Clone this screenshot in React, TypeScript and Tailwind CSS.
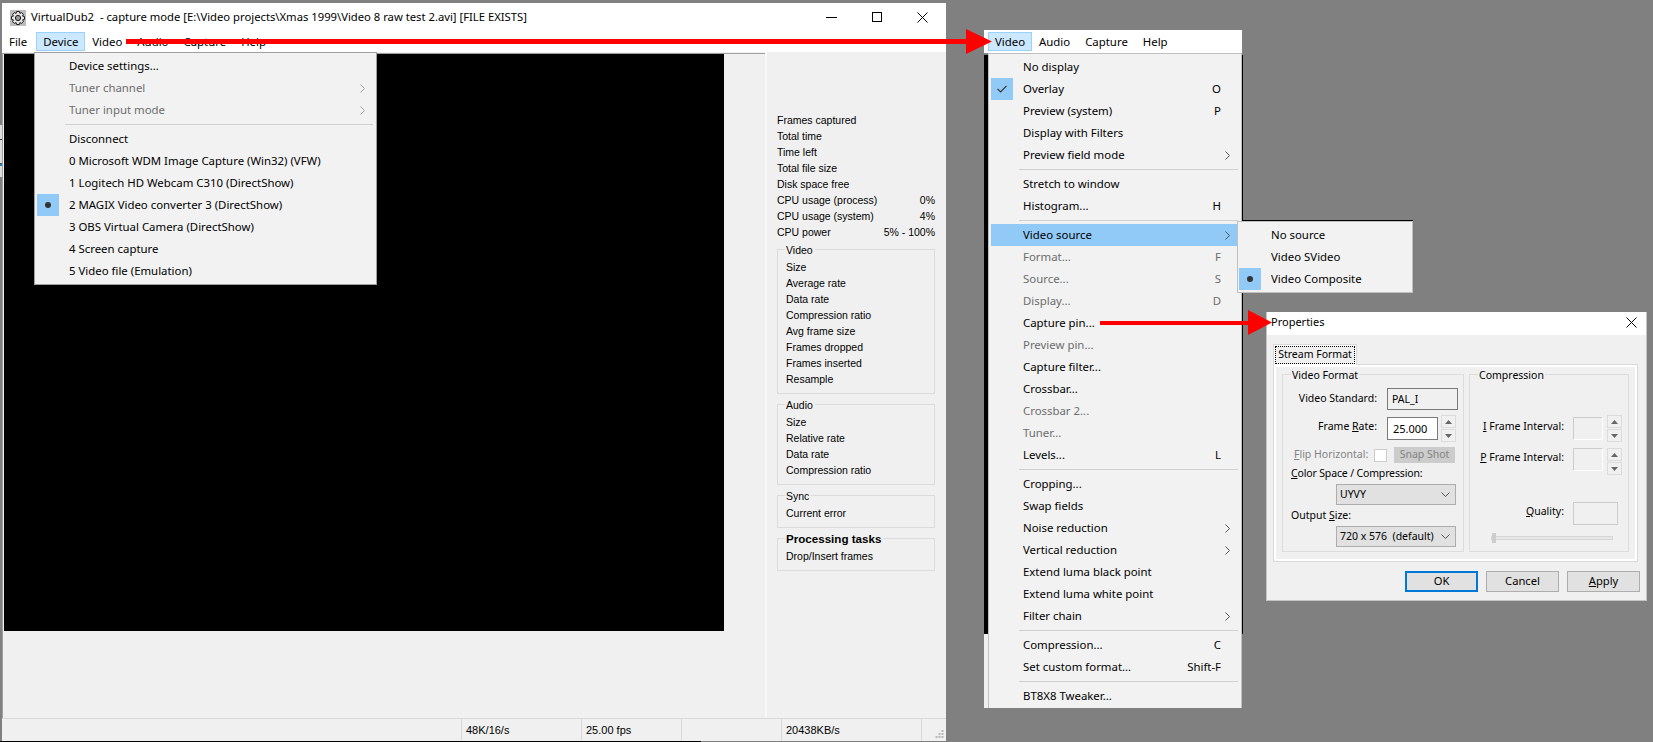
import type { ReactNode } from "react";

const UI = "font-['Noto_Sans',sans-serif] text-[11.4px] text-black";
const SMALL = "font-['Liberation_Sans',sans-serif] text-[10.5px] text-black";

type Item =
  | "sep"
  | {
      label: string;
      key?: string;
      arrow?: boolean;
      off?: boolean;
      mark?: "check" | "dot";
      hot?: boolean;
    };

const DEVICE_ITEMS: Item[] = [
  { label: "Device settings..." },
  { label: "Tuner channel", off: true, arrow: true },
  { label: "Tuner input mode", off: true, arrow: true },
  "sep",
  { label: "Disconnect" },
  { label: "0 Microsoft WDM Image Capture (Win32) (VFW)" },
  { label: "1 Logitech HD Webcam C310 (DirectShow)" },
  { label: "2 MAGIX Video converter 3 (DirectShow)", mark: "dot" },
  { label: "3 OBS Virtual Camera (DirectShow)" },
  { label: "4 Screen capture" },
  { label: "5 Video file (Emulation)" },
];

const VIDEO_ITEMS: Item[] = [
  { label: "No display" },
  { label: "Overlay", key: "O", mark: "check" },
  { label: "Preview (system)", key: "P" },
  { label: "Display with Filters" },
  { label: "Preview field mode", arrow: true },
  "sep",
  { label: "Stretch to window" },
  { label: "Histogram...", key: "H" },
  "sep",
  { label: "Video source", arrow: true, hot: true },
  { label: "Format...", key: "F", off: true },
  { label: "Source...", key: "S", off: true },
  { label: "Display...", key: "D", off: true },
  { label: "Capture pin..." },
  { label: "Preview pin...", off: true },
  { label: "Capture filter..." },
  { label: "Crossbar..." },
  { label: "Crossbar 2...", off: true },
  { label: "Tuner...", off: true },
  { label: "Levels...", key: "L" },
  "sep",
  { label: "Cropping..." },
  { label: "Swap fields" },
  { label: "Noise reduction", arrow: true },
  { label: "Vertical reduction", arrow: true },
  { label: "Extend luma black point" },
  { label: "Extend luma white point" },
  { label: "Filter chain", arrow: true },
  "sep",
  { label: "Compression...", key: "C" },
  { label: "Set custom format...", key: "Shift-F" },
  "sep",
  { label: "BT8X8 Tweaker..." },
];

const SOURCE_ITEMS: Item[] = [
  { label: "No source" },
  { label: "Video SVideo" },
  { label: "Video Composite", mark: "dot" },
];

function MenuRows({ items, keyed }: { items: Item[]; keyed?: boolean }) {
  return (
    <>
      {items.map((it, i) =>
        it === "sep" ? (
          <div key={i} className="h-[7px] flex items-center pl-[28px] pr-[1px]">
            <div className="h-px w-full bg-[#d0d0d0]" />
          </div>
        ) : (
          <div
            key={i}
            className={`h-[22px] flex items-center ${it.hot ? "bg-[#91c9f7]" : ""} ${it.off ? "text-[#6d6d6d]" : "text-black"}`}
          >
            <div
              className={`w-[22px] h-[22px] shrink-0 flex items-center justify-center ${it.mark ? "bg-[#91c9f7]" : ""}`}
            >
              {it.mark === "dot" && <div className="w-[6px] h-[6px] rounded-full bg-[#333]" />}
              {it.mark === "check" && (
                <svg width="10" height="8" viewBox="0 0 10 8" fill="none">
                  <path d="M0.5 3.8 L3.6 7 L9.5 0.8" stroke="#333" strokeWidth="1.2" />
                </svg>
              )}
            </div>
            <span className="ml-[10px] flex-1 whitespace-nowrap">{it.label}</span>
            {keyed && <span className="whitespace-nowrap">{it.key}</span>}
            <span className="w-[18px] flex justify-end pr-[9px]">
              {it.arrow && (
                <svg width="5" height="9" viewBox="0 0 5 9" fill="none">
                  <path d="M0.5 0.5 L4.5 4.5 L0.5 8.5" stroke={it.off ? "#a0a0a0" : "#555"} />
                </svg>
              )}
            </span>
          </div>
        ),
      )}
    </>
  );
}

function Row({ children, value }: { children: ReactNode; value?: string }) {
  return (
    <div className="h-[16px] leading-[16px] flex justify-between whitespace-nowrap">
      <span>{children}</span>
      {value && <span>{value}</span>}
    </div>
  );
}

function GroupBox({ title, rows, bold, mt }: { title: string; rows: string[]; bold?: boolean; mt: string }) {
  return (
    <div className={`relative border border-[#dcdcdc] pt-[9px] pb-[6px] pl-[8px] ${mt}`}>
      <span
        className={`absolute left-[7px] -top-[8px] h-[16px] leading-[16px] bg-[#f0f0f0] pl-px pr-[2px] ${bold ? "font-bold text-[11.6px]" : ""}`}
      >
        {title}
      </span>
      {rows.map((r) => (
        <Row key={r}>{r}</Row>
      ))}
    </div>
  );
}

function Spin() {
  return (
    <div className="w-[15px] flex flex-col gap-px">
      {[0, 1].map((n) => (
        <div key={n} className="h-[13px] border border-[#dcdcdc] flex items-center justify-center">
          <svg width="7" height="4" viewBox="0 0 7 4">
            <path d={n === 0 ? "M3.5 0 L7 4 L0 4 Z" : "M0 0 L7 0 L3.5 4 Z"} fill="#666" />
          </svg>
        </div>
      ))}
    </div>
  );
}

function Combo({ text }: { text: string }) {
  return (
    <div className="ml-[53px] mt-[3px] w-[120px] h-[21px] bg-[#e1e1e1] border border-[#adadad] flex items-center pl-[3px] pr-[5px] justify-between">
      <span className="whitespace-pre">{text}</span>
      <svg className="shrink-0" width="9" height="6" viewBox="0 0 9 6" fill="none">
        <path d="M0.5 0.5 L4.5 4.5 L8.5 0.5" stroke="#555" />
      </svg>
    </div>
  );
}

function DlgButton({ children, primary }: { children: ReactNode; primary?: boolean }) {
  return (
    <div
      className={`w-[73px] h-[21px] bg-[#e1e1e1] flex items-center justify-center text-[11.2px] ${primary ? "border-2 border-[#0078d7]" : "border border-[#adadad]"}`}
    >
      {children}
    </div>
  );
}

function Legend({ children }: { children: ReactNode }) {
  return (
    <span className="absolute left-[8px] -top-[8px] h-[16px] leading-[16px] bg-[#f0f0f0] px-px whitespace-nowrap">{children}</span>
  );
}

export default function App() {
  return (
    <div className="relative w-[1653px] h-[742px] overflow-hidden bg-[#808080]">
      {/* main capture window */}
      <div className={`absolute left-[2px] top-[3px] w-[944px] h-[738px] flex flex-col bg-[#f0f0f0] ${UI}`}>
        <div className="h-[28px] shrink-0 bg-white flex items-center relative">
          <svg className="ml-[8px] mt-[1px]" width="16" height="16" viewBox="0 0 16 16">
            <rect width="16" height="16" fill="#bdbdbd" />
            <path
              d="M6.6 1.5 H9.4 L9.9 3.4 L11.7 2.6 L13.4 4.3 L12.6 6.1 L14.5 6.6 V9.4 L12.6 9.9 L13.4 11.7 L11.7 13.4 L9.9 12.6 L9.4 14.5 H6.6 L6.1 12.6 L4.3 13.4 L2.6 11.7 L3.4 9.9 L1.5 9.4 V6.6 L3.4 6.1 L2.6 4.3 L4.3 2.6 L6.1 3.4 Z"
              fill="#e4e4e4"
              stroke="#1c1c1c"
            />
            <circle cx="8" cy="8" r="2.6" fill="#9a9a9a" stroke="#1c1c1c" />
          </svg>
          <span className="ml-[5px] whitespace-pre text-[11.25px]">
            VirtualDub2  - capture mode [E:\Video projects\Xmas 1999\Video 8 raw test 2.avi] [FILE EXISTS]
          </span>
          <div className="ml-auto flex items-center pr-[18px] gap-[35px]">
            <svg width="11" height="1" viewBox="0 0 11 1">
              <rect width="11" height="1" fill="#000" />
            </svg>
            <svg width="10" height="10" viewBox="0 0 10 10" fill="none">
              <rect x="0.5" y="0.5" width="9" height="9" stroke="#000" />
            </svg>
            <svg width="11" height="11" viewBox="0 0 11 11" fill="none">
              <path d="M0.5 0.5 L10.5 10.5 M10.5 0.5 L0.5 10.5" stroke="#000" />
            </svg>
          </div>
        </div>
        <div className="h-[21px] shrink-0 bg-white flex items-center">
          <span className="ml-[7px]">File</span>
          <span className="ml-[9px] h-[19px] w-[49px] bg-[#cce8ff] border border-[#99d1ff] pl-[6px] leading-[17px]">
            Device
          </span>
          <span className="ml-[7px]">Video</span>
          <span className="ml-[15px]">Audio</span>
          <span className="ml-[15px]">Capture</span>
          <span className="ml-[15px]">Help</span>
        </div>
        <div className="flex-1 flex min-h-0">
          <div className="w-[763px] shrink-0 border-t border-l border-[#a0a0a0] mt-px pl-px">
            <div className="w-[720px] h-[577px] bg-black" />
          </div>
          <div className={`flex-1 border-l-2 border-[#f8f8f8] pt-[60px] pl-[10px] pr-[11px] ${SMALL}`}>
            <Row>Frames captured</Row>
            <Row>Total time</Row>
            <Row>Time left</Row>
            <Row>Total file size</Row>
            <Row>Disk space free</Row>
            <Row value="0%">CPU usage (process)</Row>
            <Row value="4%">CPU usage (system)</Row>
            <Row value="5% - 100%">CPU power</Row>
            <GroupBox
              mt="mt-[9px]"
              title="Video"
              rows={["Size", "Average rate", "Data rate", "Compression ratio", "Avg frame size", "Frames dropped", "Frames inserted", "Resample"]}
            />
            <GroupBox mt="mt-[10px]" title="Audio" rows={["Size", "Relative rate", "Data rate", "Compression ratio"]} />
            <GroupBox mt="mt-[10px]" title="Sync" rows={["Current error"]} />
            <GroupBox mt="mt-[10px]" title="Processing tasks" bold rows={["Drop/Insert frames"]} />
          </div>
        </div>
        <div className="h-[23px] shrink-0 border-t border-[#d9d9d9] flex items-center font-['Liberation_Sans',sans-serif] text-[11px]">
          <div className="w-[460px] h-full border-r border-[#d9d9d9]" />
          <div className="w-[120px] h-full border-r border-[#d9d9d9] pl-[4px] leading-[22px]">48K/16/s</div>
          <div className="w-[100px] h-full border-r border-[#d9d9d9] pl-[4px] leading-[22px]">25.00 fps</div>
          <div className="w-[100px] h-full border-r border-[#d9d9d9]" />
          <div className="w-[140px] h-full border-r border-[#d9d9d9] pl-[4px] leading-[22px]">20438KB/s</div>
          <svg className="ml-auto mr-[2px] mt-[8px]" width="9" height="9" viewBox="0 0 9 9" fill="#b8b8b8">
            <rect x="6.5" y="0" width="2" height="2" />
            <rect x="3.5" y="3" width="2" height="2" />
            <rect x="6.5" y="3" width="2" height="2" />
            <rect x="0.5" y="6" width="2" height="2" />
            <rect x="3.5" y="6" width="2" height="2" />
            <rect x="6.5" y="6" width="2" height="2" />
          </svg>
        </div>
      </div>
      <div className="absolute left-0 top-[741px] w-[701px] h-px bg-black" />
      {/* sliver of the window behind, left edge */}
      <div className="absolute left-0 top-[125px] w-[2px] h-[52px] bg-[#dcdcdc]">
        <div className="h-[14px]" />
        <div className="h-px bg-[#333]" />
        <div className="h-[23px]" />
        <div className="h-px bg-[#555]" />
        <div className="h-[2px] bg-[#2a7fc0]" />
      </div>

      {/* device menu */}
      <div className={`absolute left-[34px] top-[52px] w-[343px] border border-[#a0a0a0] bg-[#f2f2f2] p-[2px] ${UI}`}>
        <MenuRows items={DEVICE_ITEMS} />
      </div>

      {/* second capture of the window, video menu open */}
      <div className="absolute left-[984px] top-[30px] w-[260px] h-[678px] flex flex-col">
        <div className={`w-[258px] h-[23px] bg-white flex items-center ${UI}`}>
          <span className="ml-[4px] h-[19px] w-[44px] bg-[#cce8ff] border border-[#99d1ff] pl-[6px] leading-[17px]">
            Video
          </span>
          <span className="ml-[7px]">Audio</span>
          <span className="ml-[15px]">Capture</span>
          <span className="ml-[15px]">Help</span>
        </div>
        <div className="w-[259px] h-[579px] bg-black mt-[2px]" />
        <div className="w-[258px] flex-1 bg-[#f0f0f0]" />
      </div>
      <div className={`absolute left-[988px] top-[53px] w-[254px] h-[655px] overflow-hidden border-x border-t border-[#c0c0c0] bg-[#f2f2f2] p-[2px] ${UI}`}>
        <MenuRows items={VIDEO_ITEMS} keyed />
      </div>

      {/* video source submenu */}
      <div className="absolute left-[1242px] top-[220px] w-[171px] h-px bg-black" />
      <div className={`absolute left-[1237px] top-[221px] w-[176px] border border-[#c0c0c0] bg-[#f2f2f2] p-px pt-[2px] pb-[2px] ${UI}`}>
        <MenuRows items={SOURCE_ITEMS} />
      </div>

      {/* properties dialog */}
      <div className={`absolute left-[1266px] top-[312px] w-[381px] h-[289px] flex flex-col bg-[#f0f0f0] border-b border-x border-[#c4c4c4] font-['Noto_Sans',sans-serif] text-[10.5px] text-black`}>
        <div className="h-[23px] shrink-0 bg-white flex items-center justify-between pl-[4px] pr-[9px] pb-[2px] text-[11px]">
          <span>Properties</span>
          <svg width="11" height="11" viewBox="0 0 11 11" fill="none">
            <path d="M0.5 0.5 L10.5 10.5 M10.5 0.5 L0.5 10.5" stroke="#000" />
          </svg>
        </div>
        <div className="ml-[6px] mt-[9px] w-[84px] h-[21px] border border-b-0 border-[#d9d9d9] bg-white p-px relative z-10 -mb-px">
          <div className="h-full bg-[#f0f0f0] border border-dotted border-black flex items-center justify-center whitespace-nowrap">
            Stream Format
          </div>
        </div>
        <div className="ml-[6px] w-[365px] h-[198px] border border-[#d9d9d9]">
          <div className="h-full border-2 border-white pt-[7px] pl-[6px] flex gap-[5px]">
            {/* video format */}
            <div className="relative w-[182px] h-[178px] border border-[#dcdcdc]">
              <Legend>Video Format</Legend>
              <div className="mt-[13px] flex items-center h-[22px]">
                <span className="w-[94px] text-right whitespace-nowrap">Video Standard:</span>
                <div className="ml-[10px] w-[71px] h-[22px] border border-[#7a7a7a] pl-[4px] leading-[20px]">PAL_I</div>
              </div>
              <div className="mt-[7px] flex items-center h-[23px]">
                <span className="w-[94px] text-right pb-[3px]">
                  Frame <u>R</u>ate:
                </span>
                <div className="ml-[10px] w-[51px] h-[23px] border border-[#7a7a7a] bg-white pl-[5px] leading-[21px] text-[11px]">25.000</div>
                <div className="ml-[3px]">
                  <Spin />
                </div>
              </div>
              <div className="mt-[7px] flex items-center h-[16px] pl-[11px]">
                <span className="w-[80px] text-[#838383] whitespace-nowrap">
                  <u>F</u>lip Horizontal:
                </span>
                <div className="w-[13px] h-[13px] border border-[#cccccc] bg-white" />
                <div className="ml-[7px] w-[61px] h-[16px] bg-[#cccccc] text-[#838383] flex items-center justify-center">Snap Shot</div>
              </div>
              <div className="mt-[2px] h-[16px] leading-[16px] pl-[8px] tracking-[-0.15px]">
                <u>C</u>olor Space / Compression:
              </div>
              <Combo text="UYVY" />
              <div className="mt-[2px] h-[16px] leading-[16px] pl-[8px]">
                Output <u>S</u>ize:
              </div>
              <Combo text="720 x 576  (default)" />
            </div>
            {/* compression */}
            <div className="relative w-[160px] h-[178px] border border-[#dcdcdc]">
              <Legend>Compression</Legend>
              <div className="mt-[42px] flex items-center h-[23px]">
                <span className="w-[94px] text-right whitespace-nowrap pb-[4px]">
                  <u>I</u> Frame Interval:
                </span>
                <div className="ml-[9px] w-[30px] h-[23px] border border-[#cccccc] border-b-white border-r-white" />
                <div className="ml-[4px]">
                  <Spin />
                </div>
              </div>
              <div className="mt-[8px] flex items-center h-[23px]">
                <span className="w-[98px] text-right whitespace-nowrap -ml-[4px] mr-[4px] pb-[4px]">
                  <u>P</u> Frame Interval:
                </span>
                <div className="ml-[5px] w-[30px] h-[23px] border border-[#cccccc] border-b-white border-r-white" />
                <div className="ml-[4px] mt-[4px]">
                  <Spin />
                </div>
              </div>
              <div className="mt-[31px] flex items-center h-[23px]">
                <span className="w-[94px] text-right pb-[4px]">
                  <u>Q</u>uality:
                </span>
                <div className="ml-[9px] w-[45px] h-[23px] border border-[#cccccc]" />
              </div>
              <div className="relative mt-[11px] ml-[21px] w-[122px] h-[4px] bg-[#e7e7e7] border border-[#d6d6d6]">
                <div className="absolute left-0 -top-[4px] w-[4px] h-[10px] bg-[#cdcdcd]" />
              </div>
            </div>
          </div>
        </div>
        <div className="mt-[9px] pr-[6px] flex justify-end gap-[8px]">
          <DlgButton primary>OK</DlgButton>
          <DlgButton>Cancel</DlgButton>
          <DlgButton>
            <span>
              <u>A</u>pply
            </span>
          </DlgButton>
        </div>
      </div>

      {/* annotation arrows */}
      <svg className="absolute left-[126px] top-[29px]" width="866" height="25" viewBox="0 0 866 25">
        <path d="M0 10 H840 V0 L866 12.5 L840 25 V15 H0 Z" fill="#ff0000" />
      </svg>
      <svg className="absolute left-[1100px] top-[310px]" width="172" height="25" viewBox="0 0 172 25">
        <path d="M0 11 H148 V0 L172 12.5 L148 25 V15 H0 Z" fill="#ff0000" />
      </svg>
    </div>
  );
}
